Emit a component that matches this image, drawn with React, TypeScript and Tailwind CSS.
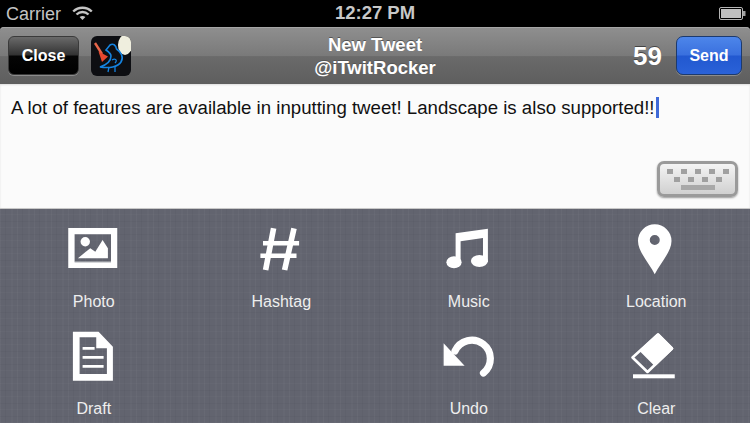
import type { ReactNode } from "react";

type Action = { label: string; icon: ReactNode };

const font = { fontFamily: '"Liberation Sans", Arial, sans-serif' };

const PhotoIcon = (
  <>
    <path
      fillRule="evenodd"
      d="M4.25 6h49v40h-49zM10.6 12.3v27.4H47V12.3z"
    />
    <rect x="10.6" y="39.7" width="36.4" height="0.8" fill="#a9abb2" />
    <circle cx="21.25" cy="19.7" r="4.7" />
    <path d="M13.9 36.3 21.2 30.3 26.3 26.3 31.3 29.7 38.6 18 43.9 26.3V36.3z" />
  </>
);

const HashIcon = (
  <g stroke="#fff" strokeWidth="5.6" fill="none">
    <path d="M22.6 6.3 14.6 48M43 6.3 33.6 48" />
    <path d="M12 21.3H48.1M9.4 33.7H45.5" strokeWidth="4.6" />
  </g>
);

const MusicIcon = (
  <>
    <path d="M16.6 11.3 48.9 6.7V40H44V15.9L21.6 19.2V41H16.6z" />
    <ellipse cx="15" cy="40.3" rx="7.6" ry="6" />
    <ellipse cx="40.4" cy="39" rx="8.5" ry="6" />
  </>
);

const LocationIcon = (
  <path
    fillRule="evenodd"
    d="M28.75 52.3C24 42 12 30 12 19A16.75 16.75 0 0 1 45.5 19C45.5 30 33.5 42 28.75 52.3ZM28.75 13A5 5 0 1 0 28.75 23A5 5 0 1 0 28.75 13Z"
  />
);

const DraftIcon = (
  <>
    <path
      fillRule="evenodd"
      d="M8.9 2.7H34.6L48.9 17.7V51.7H8.9ZM15.6 8.3V45H42.9V19.3H32.25V8.3Z"
    />
    <path d="M18.6 18H30.6V20.7H18.6zM18.6 27H39.6V29.7H18.6zM18.6 36H39.6V38.7H18.6z" />
  </>
);

const UndoIcon = (
  <>
    <path d="M4.6 14.3V36.7H25.6z" />
    <path
      d="M16 22A18.5 18.5 0 1 1 44.5 44"
      fill="none"
      stroke="#fff"
      strokeWidth="7.2"
      strokeLinecap="round"
    />
  </>
);

const ClearIcon = (
  <>
    <path
      d="M32 5.5 46 19.5 21.5 43 6.5 28.5Z"
      fill="none"
      stroke="#fff"
      strokeWidth="2.6"
      strokeLinejoin="round"
    />
    <path
      d="M32 5.5 46 19.5 29 35.5 15 21.5Z"
      stroke="#fff"
      strokeWidth="2.6"
      strokeLinejoin="round"
    />
    <rect x="7" y="45.3" width="41.75" height="4" />
  </>
);

const actions: Action[] = [
  { label: "Photo", icon: PhotoIcon },
  { label: "Hashtag", icon: HashIcon },
  { label: "Music", icon: MusicIcon },
  { label: "Location", icon: LocationIcon },
  { label: "Draft", icon: DraftIcon },
  { label: "", icon: null },
  { label: "Undo", icon: UndoIcon },
  { label: "Clear", icon: ClearIcon },
];

function StatusBar() {
  return (
    <div className="relative flex h-[27px] shrink-0 items-center justify-between bg-black pl-[6px] pr-[4px] text-[#c4c4c4]">
      <div className="flex items-center gap-[11px]">
        <span className="text-[18px] leading-none">Carrier</span>
        <svg width="21" height="15" viewBox="0 0 21 15" fill="none" stroke="#c4c4c4" strokeWidth="2.4">
          <path d="M1.2 5.5C6.5 .5 14.5 .5 19.8 5.5" />
          <path d="M4.5 8.5C8 5.2 13 5.2 16.5 8.5" />
          <path d="M10.5 14 7.6 11C9.3 9.7 11.7 9.7 13.4 11Z" fill="#c4c4c4" stroke="none" />
        </svg>
      </div>
      <span className="absolute left-0 right-0 text-center text-[18.5px] font-bold leading-none text-[#c8c8c8]">
        12:27 PM
      </span>
      <svg width="27" height="13" viewBox="0 0 27 13">
        <rect x="0.5" y="0.5" width="23" height="12" rx="1.5" fill="none" stroke="#b5b5b5" />
        <rect x="2" y="2" width="20" height="9" fill="#c0c0c0" />
        <rect x="24" y="4" width="2.5" height="5" fill="#a0a0a0" />
      </svg>
    </div>
  );
}

function AppIcon() {
  return (
    <div className="relative ml-[12px] h-[40px] w-[40px] overflow-hidden rounded-[6px] bg-[#0d0e12]">
      <svg width="40" height="40" viewBox="0 0 40 40" fill="none">
        <ellipse cx="34" cy="9" rx="7" ry="10" fill="#efeede" />
        <path d="M4 7 11 18" stroke="#e8664a" strokeWidth="2.4" />
        <path d="M7.5 15.5 17 20.5 11 26Z" fill="#e8472f" />
        <g stroke="#1583e0">
          <path
            d="M15 14 19 9C22 7 25 9 25.5 13C30 16 33 21 30 26C27 31 18 32.5 9 31C15 29 20 25 20 20C20 18 18 16 15 14Z"
            strokeWidth="1.6"
          />
          <path d="M18 31 17 36M24 31 24 36M21 24C24 22 27 24 24 27" strokeWidth="1.3" />
        </g>
      </svg>
    </div>
  );
}

function NavBar() {
  return (
    <div className="shrink-0 bg-black">
      <div className="grid h-[57px] grid-cols-[1fr_auto_1fr] items-center rounded-t-[4px] bg-[linear-gradient(#8f8f8f,#7a7a7a_50%,#6a6a6a_52%,#5e5e5e)] px-[8px] shadow-[inset_0_1px_0_#a5a5a5]">
        <div className="flex items-center">
          <button className="h-[39px] w-[71px] rounded-[6px] border border-[#3a3a3a] bg-[linear-gradient(#6a6a6a,#333_48%,#050505_52%,#000)] text-[16px] font-bold text-white shadow-[0_1px_0_#8c8c8c]">
            Close
          </button>
          <AppIcon />
        </div>
        <div className="text-center text-[18.5px] font-bold leading-[23px] text-white [text-shadow:0_-1px_0_#555]">
          <div>New Tweet</div>
          <div>@iTwitRocker</div>
        </div>
        <div className="flex items-center justify-end">
          <span className="text-[26px] font-bold leading-none text-white [text-shadow:0_-1px_0_#444]">59</span>
          <button className="ml-[14px] h-[39px] w-[66px] rounded-[7px] border border-[#1c3a6e] bg-[linear-gradient(#4d86ea,#3a70de_48%,#2258d0_52%,#2a62d8)] text-[16px] font-bold text-white shadow-[0_1px_0_#8c8c8c]">
            Send
          </button>
        </div>
      </div>
    </div>
  );
}

function KeyboardButton() {
  return (
    <div className="mb-[11px] mr-[12px] flex h-[36px] w-[81px] flex-col items-center justify-center gap-[3px] self-end rounded-[7px] border-[3px] border-[#9a9a9a] bg-[linear-gradient(#f4f4f4,#d0d0d0)] shadow-[0_1px_2px_#999]">
      <div className="flex gap-[8px]">
        {[0, 1, 2, 3, 4].map((k) => (
          <span key={k} className="h-[5px] w-[6px] bg-[#a0a0a0]" />
        ))}
      </div>
      <div className="flex gap-[8px]">
        {[0, 1, 2, 3].map((k) => (
          <span key={k} className="h-[5px] w-[6px] bg-[#a0a0a0]" />
        ))}
      </div>
      <span className="h-[5px] w-[34px] bg-[#a8a8a8]" />
    </div>
  );
}

function ActionPanel() {
  return (
    <div className="grid min-h-0 flex-1 grid-cols-4 auto-rows-[107px] border-t border-[#c8c8c8] bg-[#62646f] bg-[repeating-linear-gradient(90deg,rgba(255,255,255,0.03)_0_1px,transparent_1px_5px,rgba(0,0,0,0.03)_5px_6px,transparent_6px_11px,rgba(255,255,255,0.02)_11px_13px,transparent_13px_17px),repeating-linear-gradient(0deg,rgba(255,255,255,0.02)_0_1px,transparent_1px_6px,rgba(0,0,0,0.03)_6px_7px,transparent_7px_13px)] pt-[13px]">
      {actions.map((a, i) => (
        <div key={i} className="flex flex-col items-center">
          {a.icon && (
            <svg width="60" height="53" viewBox="0 0 60 53" fill="#fff">
              {a.icon}
            </svg>
          )}
          <span className="mt-[18px] text-[16px] leading-[18px] text-[#eeeeee]">{a.label}</span>
        </div>
      ))}
    </div>
  );
}

export default function App() {
  return (
    <div style={font} className="flex h-[423px] w-[750px] flex-col overflow-hidden bg-black">
      <StatusBar />
      <NavBar />
      <div className="flex h-[124px] shrink-0 flex-col justify-between bg-[#fbfbfb] shadow-[inset_0_1px_2px_#ddd]">
        <p className="pl-[11px] pt-[13px] text-[18.65px] leading-[22px] text-[#111]">
          A lot of features are available in inputting tweet! Landscape is also supported!!
          <span className="ml-[1px] inline-block h-[21px] w-[3px] bg-[#3f6ad8] align-top" />
        </p>
        <KeyboardButton />
      </div>
      <ActionPanel />
    </div>
  );
}
